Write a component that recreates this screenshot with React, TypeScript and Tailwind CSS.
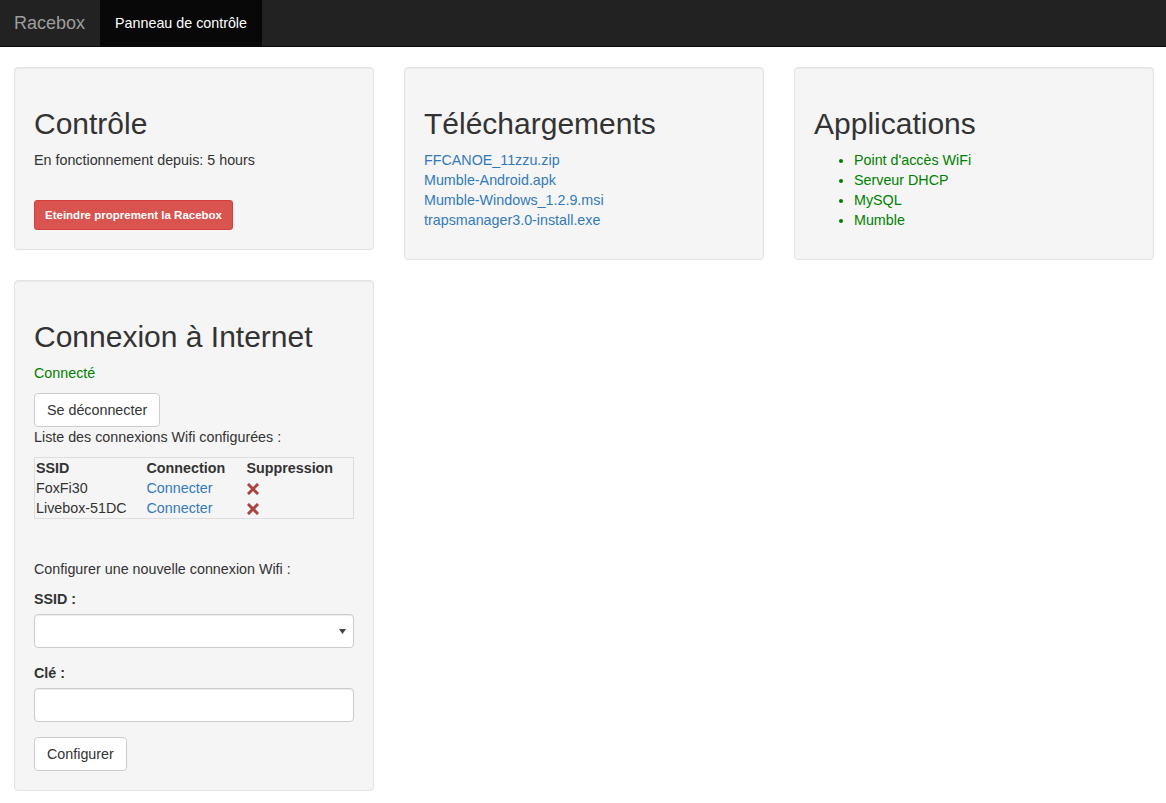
import React from 'react'

const well =
  'bg-[#f5f5f5] border border-[#e3e3e3] rounded-[4px] p-[19px] shadow-[inset_0_1px_1px_rgba(0,0,0,0.05)] mb-[20px]'
const h1 = 'text-[30px] leading-[33px] font-normal text-[#333] mt-[20px] mb-[10px]'
const link = 'block text-[#337ab7] hover:underline'
const btnDefault =
  'inline-block bg-white border border-[#ccc] rounded-[4px] px-[12px] py-[6px] text-[14.3px] leading-[20px] text-[#333]'
const field =
  'block w-full h-[34px] bg-white border border-[#ccc] rounded-[4px] px-[12px] py-[6px] text-[14px] text-[#555] shadow-[inset_0_1px_1px_rgba(0,0,0,0.075)] outline-none'

const downloads = [
  'FFCANOE_11zzu.zip',
  'Mumble-Android.apk',
  'Mumble-Windows_1.2.9.msi',
  'trapsmanager3.0-install.exe',
]

const apps = ["Point d'accès WiFi", 'Serveur DHCP', 'MySQL', 'Mumble']

const networks = ['FoxFi30', 'Livebox-51DC']

function RemoveIcon() {
  return (
    <svg width="12" height="12" viewBox="0 0 12 12" className="inline-block">
      <path d="M2 2 L10 10 M10 2 L2 10" stroke="#a94442" strokeWidth="3" strokeLinecap="square" />
    </svg>
  )
}

export default function App() {
  return (
    <div
      className="min-h-screen bg-white text-[14.3px] leading-[20px] text-[#333]"
      style={{ fontFamily: '"Liberation Sans", Arial, sans-serif' }}
    >
      {/* Navbar */}
      <div className="h-[47px] bg-[#222] border-b border-[#080808] flex items-stretch">
        <div className="pl-[14px] pr-[15px] flex items-center text-[18px] text-[#9d9d9d]">Racebox</div>
        <div className="px-[15px] flex items-center bg-[#080808] text-white text-[14.3px]">Panneau de contrôle</div>
      </div>

      <div className="px-[14px] pt-[20px]">
        {/* Row 1 */}
        <div className="grid grid-cols-[360px_360px_360px] gap-x-[30px] items-start">
          <div className={well}>
            <h1 className={h1}>Contrôle</h1>
            <p className="mb-[30px]">En fonctionnement depuis: 5 hours</p>
            <button className="bg-[#d9534f] border border-[#d43f3a] text-white font-bold text-[11.5px] leading-[18px] px-[10px] py-[5px] rounded-[3px]">
              Eteindre proprement la Racebox
            </button>
          </div>

          <div className={well}>
            <h1 className={h1}>Téléchargements</h1>
            <div className="mb-[10px]">
              {downloads.map((d) => (
                <a key={d} href="#" className={link}>
                  {d}
                </a>
              ))}
            </div>
          </div>

          <div className={well}>
            <h1 className={h1}>Applications</h1>
            <ul className="list-disc pl-[40px] mb-[10px] text-[#008000]">
              {apps.map((a) => (
                <li key={a}>{a}</li>
              ))}
            </ul>
          </div>
        </div>

        {/* Row 2 */}
        <div className="grid grid-cols-[360px_360px_360px] gap-x-[30px] items-start">
          <div className={well}>
            <h1 className={h1}>Connexion à Internet</h1>
            <p className="text-[#008000] mb-[10px]">Connecté</p>
            <button className={btnDefault}>Se déconnecter</button>
            <p className="mb-[10px]">Liste des connexions Wifi configurées :</p>

            <table className="w-full border border-[#ddd] border-collapse mb-[40px]">
              <thead>
                <tr className="text-left">
                  <th className="w-[111px] px-[1px] font-bold">SSID</th>
                  <th className="w-[100px] px-[1px] font-bold">Connection</th>
                  <th className="px-[1px] font-bold">Suppression</th>
                </tr>
              </thead>
              <tbody>
                {networks.map((n) => (
                  <tr key={n}>
                    <td className="px-[1px]">{n}</td>
                    <td className="px-[1px]">
                      <a href="#" className="text-[#337ab7]">
                        Connecter
                      </a>
                    </td>
                    <td className="px-[1px]">
                      <RemoveIcon />
                    </td>
                  </tr>
                ))}
              </tbody>
            </table>

            <p className="mb-[10px]">Configurer une nouvelle connexion Wifi :</p>

            <div className="mb-[15px]">
              <label className="block font-bold mb-[5px]">SSID :</label>
              <div className="relative">
                <select className={`${field} appearance-none`}>
                  <option></option>
                </select>
                <svg width="7" height="5" viewBox="0 0 7 5" className="absolute right-[8px] top-[15px]">
                  <path d="M0 0 H7 L3.5 5 Z" fill="#444" />
                </svg>
              </div>
            </div>

            <div className="mb-[15px]">
              <label className="block font-bold mb-[5px]">Clé :</label>
              <input type="text" className={field} />
            </div>

            <button className={btnDefault}>Configurer</button>
          </div>
        </div>
      </div>
    </div>
  )
}
